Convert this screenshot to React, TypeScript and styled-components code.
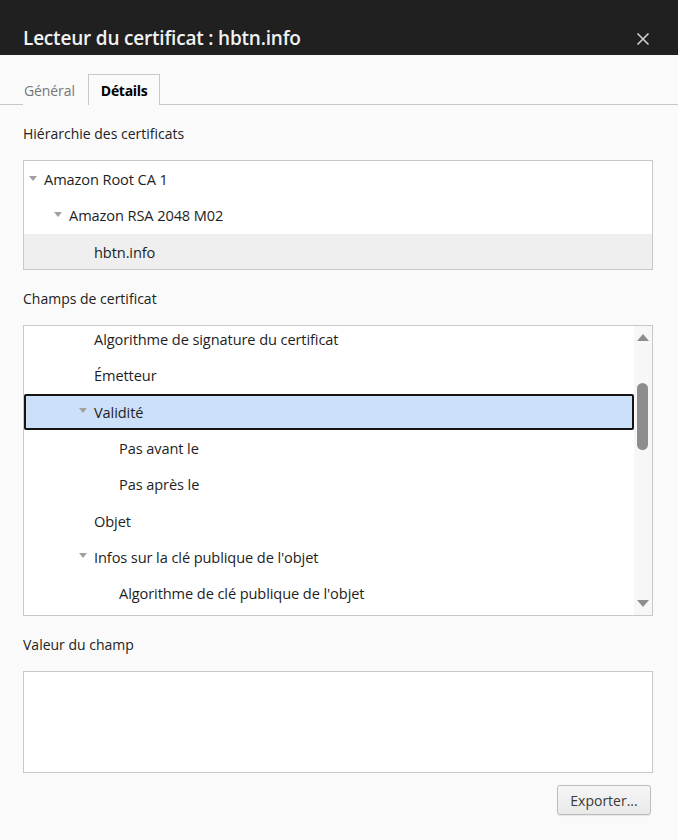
import React from "react";
import styled, { createGlobalStyle } from "styled-components";

type TreeItem = {
  label: string;
  level: number;
  expanded?: boolean;
  selected?: boolean;
  highlighted?: boolean;
};

const hierarchy: TreeItem[] = [
  { label: "Amazon Root CA 1", level: 0, expanded: true },
  { label: "Amazon RSA 2048 M02", level: 1, expanded: true },
  { label: "hbtn.info", level: 2, highlighted: true },
];

const fields: TreeItem[] = [
  { label: "Algorithme de signature du certificat", level: 2 },
  { label: "Émetteur", level: 2 },
  { label: "Validité", level: 2, expanded: true, selected: true },
  { label: "Pas avant le", level: 3 },
  { label: "Pas après le", level: 3 },
  { label: "Objet", level: 2 },
  { label: "Infos sur la clé publique de l'objet", level: 2, expanded: true },
  { label: "Algorithme de clé publique de l'objet", level: 3 },
];

const GlobalStyle = createGlobalStyle`
  html, body {
    margin: 0;
    padding: 0;
    background: #fafafa;
  }
  body {
    font-family: "Open Sans", "Noto Sans", "Liberation Sans", sans-serif;
    color: #1e1e1e;
  }
`;

const Dialog = styled.div`
  width: 678px;
  height: 840px;
  display: flex;
  flex-direction: column;
  background: #fafafa;
  overflow: hidden;
`;

const TitleBar = styled.div`
  height: 55px;
  flex-shrink: 0;
  background: #202020;
  display: flex;
  align-items: flex-end;
  justify-content: space-between;
  padding: 0 28px 4px 23px;
  box-sizing: border-box;
`;

const Title = styled.h1`
  margin: 0;
  font-size: 19px;
  font-weight: 600;
  color: #f2f2f2;
  line-height: 26px;
  letter-spacing: -0.2px;
`;

const CloseButton = styled.button`
  border: 0;
  background: none;
  padding: 0;
  margin-bottom: 5px;
  width: 14px;
  height: 14px;
  display: flex;
  cursor: pointer;
`;

const TabBar = styled.div`
  margin-top: 19px;
  height: 31px;
  display: flex;
  align-items: stretch;
  border-bottom: 1px solid #c8c8c8;
  padding-left: 23px;
  box-sizing: border-box;
`;

const Tab = styled.div<{ $active?: boolean }>`
  display: flex;
  align-items: center;
  font-size: 14px;
  padding: 0 ${({ $active }) => ($active ? "12px" : "12px 0 0")};
  color: ${({ $active }) => ($active ? "#000" : "#777")};
  font-weight: ${({ $active }) => ($active ? 700 : 400)};
  letter-spacing: ${({ $active }) => ($active ? "-0.3px" : "-0.1px")};
  background: #fafafa;
  border: 1px solid ${({ $active }) => ($active ? "#c8c8c8" : "transparent")};
  border-bottom: 0;
  margin-bottom: -1px;
`;

const Content = styled.div`
  display: flex;
  flex-direction: column;
  padding: 0 25px 0 23px;
`;

const SectionLabel = styled.div`
  margin-top: 19px;
  margin-bottom: 16px;
  height: 20px;
  line-height: 20px;
  font-size: 14px;
  color: #222;
`;

const Box = styled.div<{ $height: number }>`
  height: ${({ $height }) => $height}px;
  border: 1px solid #c8c8c8;
  background: #fff;
  box-sizing: border-box;
  display: flex;
  overflow: hidden;
`;

const List = styled.div<{ $offset?: number }>`
  flex: 1;
  display: flex;
  flex-direction: column;
  margin-top: ${({ $offset }) => -($offset ?? 0)}px;
`;

const Row = styled.div<{ $level: number; $selected?: boolean; $highlighted?: boolean }>`
  height: 36.3px;
  flex-shrink: 0;
  box-sizing: border-box;
  display: flex;
  align-items: center;
  padding-left: ${({ $level }) => 3 + $level * 25}px;
  border: 2px solid ${({ $selected }) => ($selected ? "#151515" : "transparent")};
  border-radius: ${({ $selected }) => ($selected ? "2px" : "0")};
  background: ${({ $selected, $highlighted }) =>
    $selected ? "#cce0fa" : $highlighted ? "#efefef" : "transparent"};
  font-size: 14.6px;
  letter-spacing: -0.1px;
  color: #1e1e1e;
  white-space: nowrap;
`;

const Twisty = styled.span<{ $visible?: boolean }>`
  width: 15px;
  flex-shrink: 0;
  display: flex;
  align-items: center;
  &::before {
    content: "";
    display: ${({ $visible }) => ($visible ? "block" : "none")};
    width: 0;
    height: 0;
    margin-top: -2px;
    border-left: 4px solid transparent;
    border-right: 4px solid transparent;
    border-top: 5px solid #a0a0a0;
  }
`;

const Scrollbar = styled.div`
  width: 18px;
  flex-shrink: 0;
  background: #f7f7f7;
  display: flex;
  flex-direction: column;
  align-items: center;
`;

const Arrow = styled.div<{ $up?: boolean }>`
  width: 0;
  height: 0;
  border-left: 6px solid transparent;
  border-right: 6px solid transparent;
  ${({ $up }) =>
    $up
      ? "border-bottom: 7px solid #8e8e8e; margin-top: 8px;"
      : "border-top: 7px solid #8e8e8e; margin-bottom: 8px;"}
`;

const Track = styled.div`
  flex: 1;
  width: 100%;
  position: relative;
`;

const Thumb = styled.div`
  position: absolute;
  left: 3px;
  width: 11px;
  border-radius: 6px;
  background: #8d8d8d;
`;

const Footer = styled.div`
  display: flex;
  justify-content: flex-end;
  margin-top: 12px;
  padding-right: 2px;
`;

const Button = styled.button`
  height: 30px;
  width: 94px;
  font-family: inherit;
  font-size: 14px;
  color: #3a3a3a;
  border: 1px solid #bdbdbd;
  border-radius: 3px;
  background: linear-gradient(#f6f6f6, #e9e9e9);
  box-shadow: 0 1px 1px rgba(0, 0, 0, 0.08);
  padding: 0;
  cursor: pointer;
`;

const Tree: React.FC<{ items: TreeItem[]; offset?: number }> = ({ items, offset }) => (
  <List $offset={offset}>
    {items.map((item) => (
      <Row
        key={item.label}
        $level={item.level}
        $selected={item.selected}
        $highlighted={item.highlighted}
      >
        <Twisty $visible={item.expanded} />
        {item.label}
      </Row>
    ))}
  </List>
);

export default function App() {
  return (
    <>
      <GlobalStyle />
      <Dialog>
        <TitleBar>
          <Title>Lecteur du certificat : hbtn.info</Title>
          <CloseButton aria-label="Fermer">
            <svg width="14" height="14" viewBox="0 0 14 14">
              <path d="M1.5 1.5 L12.5 12.5 M12.5 1.5 L1.5 12.5" stroke="#cfcfcf" strokeWidth="1.6" />
            </svg>
          </CloseButton>
        </TitleBar>

        <TabBar>
          <Tab>Général</Tab>
          <Tab $active>Détails</Tab>
        </TabBar>

        <Content>
          <SectionLabel>Hiérarchie des certificats</SectionLabel>
          <Box $height={110}>
            <Tree items={hierarchy} />
          </Box>

          <SectionLabel>Champs de certificat</SectionLabel>
          <Box $height={291}>
            <Tree items={fields} offset={5} />
            <Scrollbar>
              <Arrow $up />
              <Track>
                <Thumb style={{ top: 42, height: 67 }} />
              </Track>
              <Arrow />
            </Scrollbar>
          </Box>

          <SectionLabel>Valeur du champ</SectionLabel>
          <Box $height={102} />

          <Footer>
            <Button>Exporter...</Button>
          </Footer>
        </Content>
      </Dialog>
    </>
  );
}
